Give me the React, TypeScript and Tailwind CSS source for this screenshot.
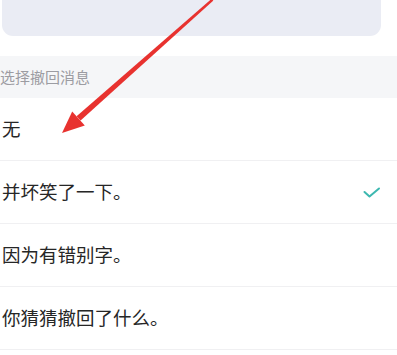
import { Fragment } from "react";

const options = [
  { id: 1, label: "无", selected: false },
  { id: 2, label: "并坏笑了一下。", selected: true },
  { id: 3, label: "因为有错别字。", selected: false },
  { id: 4, label: "你猜猜撤回了什么。", selected: false },
];

function Arrow() {
  // red annotation arrow drawn over the screenshot
  return (
    <svg
      className="pointer-events-none absolute left-0 top-0"
      width="397"
      height="355"
      viewBox="0 0 397 355"
    >
      <polygon points="211.4,-1 213.4,0.6 80.6,120.6 76.6,116.2" fill="#e8322f" />
      <polygon points="62,133 72.2,111.4 84.8,125.4" fill="#e8322f" />
    </svg>
  );
}

export default function App() {
  return (
    <div
      className="relative h-[355px] w-[397px] overflow-hidden bg-white"
      style={{ fontFamily: '"Noto Sans CJK SC", "Noto Sans", sans-serif' }}
    >
      {/* top card */}
      <div className="pl-[2px] pr-[16px]">
        <div className="h-[36px] rounded-b-[11px] bg-[#eaecf4]" />
      </div>

      <div className="h-[20px]" />

      {/* section header */}
      <div className="flex h-[42px] items-center bg-[#f5f6f8] pl-0 text-[15px] text-[#9c9ca2]">
        选择撤回消息
      </div>

      {/* options */}
      <div>
        {options.map((o) => (
          <Fragment key={o.id}>
            <div className="flex h-[63px] items-center justify-between border-b border-[#f0f0f2] pl-[2px] pr-[16px]">
              <span className="text-[18.5px] text-[#262626]">{o.label}</span>
              {o.selected && (
                <svg width="18" height="12" viewBox="0 0 18 12" className="mt-[2px]">
                  <path
                    d="M1.5 5 L6.5 9.5 L16 1.5"
                    fill="none"
                    stroke="#3db8b0"
                    strokeWidth="2"
                    strokeLinecap="round"
                    strokeLinejoin="round"
                  />
                </svg>
              )}
            </div>
          </Fragment>
        ))}
      </div>

      <Arrow />
    </div>
  );
}
